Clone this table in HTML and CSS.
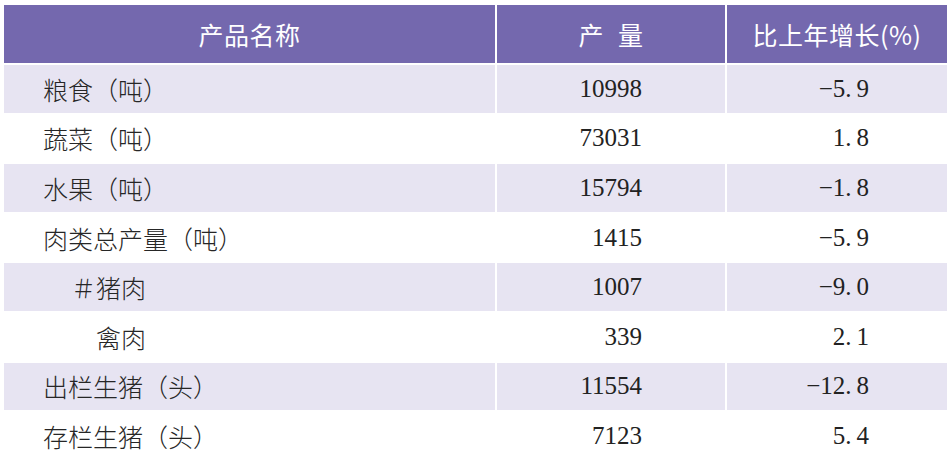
FILE: index.html
```html
<!DOCTYPE html>
<html lang="zh-CN">
<head>
<meta charset="utf-8">
<title>主要农产品产量</title>
<link rel="stylesheet" href="styles.css">
</head>
<body>
<div class="table">
  <div class="row head">
    <div class="cell name">产品名称</div>
    <div class="cell">产<span class="sp"> </span>量</div>
    <div class="cell">比上年增长(%)</div>
  </div>
  <div class="row shade">
    <div class="cell name">粮食（吨）</div>
    <div class="cell num">10998</div>
    <div class="cell pct">−5<span class="dot">.</span>9</div>
  </div>
  <div class="row">
    <div class="cell name">蔬菜（吨）</div>
    <div class="cell num">73031</div>
    <div class="cell pct">1<span class="dot">.</span>8</div>
  </div>
  <div class="row shade">
    <div class="cell name">水果（吨）</div>
    <div class="cell num">15794</div>
    <div class="cell pct">−1<span class="dot">.</span>8</div>
  </div>
  <div class="row">
    <div class="cell name">肉类总产量（吨）</div>
    <div class="cell num">1415</div>
    <div class="cell pct">−5<span class="dot">.</span>9</div>
  </div>
  <div class="row shade">
    <div class="cell name sub1">＃猪肉</div>
    <div class="cell num">1007</div>
    <div class="cell pct">−9<span class="dot">.</span>0</div>
  </div>
  <div class="row">
    <div class="cell name sub2">禽肉</div>
    <div class="cell num">339</div>
    <div class="cell pct">2<span class="dot">.</span>1</div>
  </div>
  <div class="row shade">
    <div class="cell name">出栏生猪（头）</div>
    <div class="cell num">11554</div>
    <div class="cell pct">−12<span class="dot">.</span>8</div>
  </div>
  <div class="row">
    <div class="cell name">存栏生猪（头）</div>
    <div class="cell num">7123</div>
    <div class="cell pct">5<span class="dot">.</span>4</div>
  </div>
</div>
</body>
</html>
```
FILE: styles.css
```css
html, body {
  margin: 0;
  padding: 0;
  background: #ffffff;
}

body {
  font-family: "Noto Sans CJK SC", "Noto Sans", sans-serif;
  color: #222222;
  overflow: hidden;
  text-spacing-trim: space-all;
}

.table {
  display: flex;
  flex-direction: column;
  gap: 2px;
  margin: 5px 0 0 4px;
  width: 943px;
}

.row {
  display: grid;
  grid-template-columns: 491px 228px 220px;
  column-gap: 2px;
  height: 47.6px;
}

.row.head {
  height: 58px;
}

.cell {
  display: flex;
  align-items: center;
  white-space: nowrap;
}

.head .cell {
  background: #7468ae;
  color: #ffffff;
  justify-content: center;
  font-size: 25px;
  font-weight: 400;
  letter-spacing: 0.5px;
}

.head .sp {
  display: inline-block;
  width: 14px;
}

.shade .cell {
  background: #e7e4f2;
}

.name {
  padding-left: 39px;
  font-size: 25px;
  font-weight: 300;
  color: #262626;
}

.head .name {
  padding-left: 0;
}

.sub1 {
  padding-left: 67px;
}

.sub2 {
  padding-left: 92px;
}

.num,
.pct {
  justify-content: flex-end;
  font-family: "Liberation Serif", "Times New Roman", serif;
  font-size: 25px;
  color: #222222;
}

.num {
  padding-right: 83px;
}

.pct {
  padding-right: 78px;
}

.dot {
  display: inline-block;
  width: 0.45em;
}
```
